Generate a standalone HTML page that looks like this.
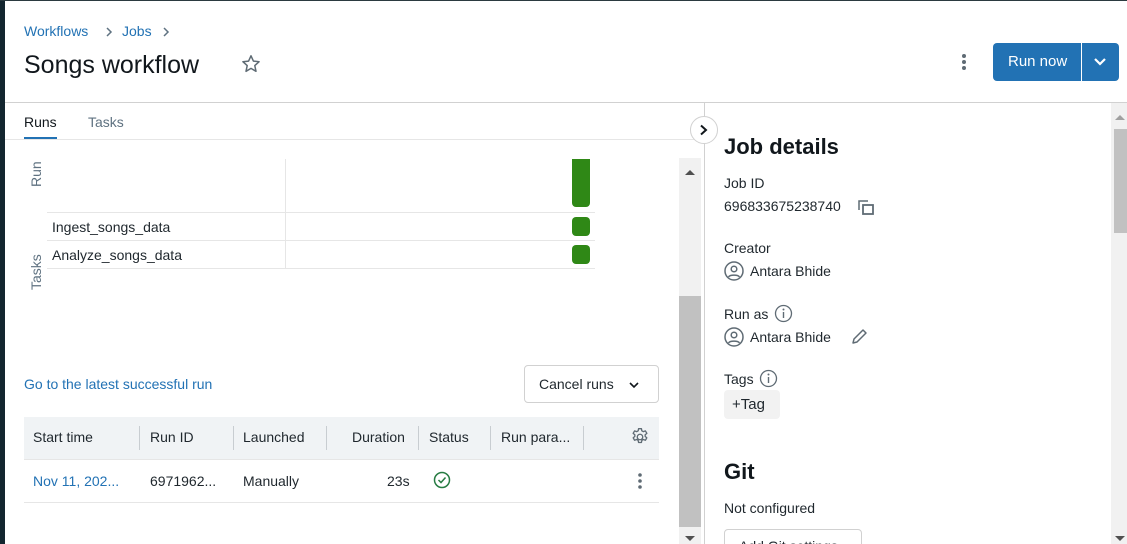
<!DOCTYPE html>
<html style="overflow:hidden;height:544px"><head><style>
*{margin:0;padding:0;box-sizing:border-box}
body{width:1127px;height:544px;overflow:hidden;background:#fff;font-family:"Liberation Sans",sans-serif;color:#1f272d;position:relative;font-size:14px}
.a{position:absolute;white-space:nowrap}
.blue{color:#2272b4}
.hl{position:absolute;background:#e6e6e6;height:1px}
.vl{position:absolute;background:#e6e6e6;width:1px}
.th{position:absolute;top:429px;font-size:14px;color:#1f272d}
.sep{position:absolute;top:426px;width:1px;height:24px;background:#c8cdd1}
</style></head><body>
<div class="a" style="left:0;top:0;width:5px;height:544px;background:#13262f"></div>
<div class="a" style="left:0;top:0;width:1127px;height:1px;background:#2b3a40"></div>

<div class="a blue" style="left:24px;top:23px;font-size:14px">Workflows</div>
<svg class="a" style="left:104px;top:26px" width="10" height="12"><path d="M3 2l4 4-4 4" fill="none" stroke="#5f7281" stroke-width="1.5"/></svg>
<div class="a blue" style="left:122px;top:23px;font-size:14px">Jobs</div>
<svg class="a" style="left:161px;top:26px" width="10" height="12"><path d="M3 2l4 4-4 4" fill="none" stroke="#5f7281" stroke-width="1.5"/></svg>
<div class="a" style="left:24px;top:51px;font-size:25px;color:#11171c">Songs workflow</div>
<svg class="a" style="left:241px;top:54px" width="20" height="20" viewBox="0 0 20 20"><path d="M10 1.8l2.4 5.3 5.7.6-4.3 3.9 1.2 5.7L10 14.4l-5 2.9 1.2-5.7L1.9 7.7l5.7-.6z" fill="none" stroke="#5f6b74" stroke-width="1.5" stroke-linejoin="round"/></svg>

<svg class="a" style="left:960px;top:53px" width="8" height="18"><circle cx="4" cy="3" r="2" fill="#5f6b74"/><circle cx="4" cy="9" r="2" fill="#5f6b74"/><circle cx="4" cy="15" r="2" fill="#5f6b74"/></svg>
<div class="a" style="left:993px;top:43px;width:126px;height:38px;background:#2272b4;border-radius:4px"></div>
<div class="a" style="left:1081px;top:43px;width:1px;height:38px;background:#fff"></div>
<div class="a" style="left:1008px;top:53px;color:#fff;font-size:15px">Run now</div>
<svg class="a" style="left:1093px;top:56px" width="14" height="12"><path d="M2 3l5 5 5-5" fill="none" stroke="#fff" stroke-width="2.2"/></svg>

<div class="hl" style="left:5px;top:102px;width:1122px;background:#d1d1d1"></div>
<div class="vl" style="left:704px;top:102px;height:442px;background:#d1d1d1"></div>

<div class="a" style="left:24px;top:114px;font-size:14px;color:#11171c">Runs</div>
<div class="a" style="left:24px;top:137px;width:33px;height:3px;background:#2272b4"></div>
<div class="a" style="left:88px;top:114px;font-size:14px;color:#5f7281">Tasks</div>
<div class="hl" style="left:5px;top:139px;width:699px"></div>

<div class="a" style="left:690px;top:116px;width:28px;height:28px;border:1px solid #d1d1d1;border-radius:50%;background:#fff"></div>
<svg class="a" style="left:699px;top:124px" width="10" height="12"><path d="M2 1.5l5 4.5-5 4.5" fill="none" stroke="#11171c" stroke-width="2"/></svg>

<div class="a" style="top:187px;left:28px;transform:rotate(-90deg);transform-origin:left top;font-size:14px;color:#5f7281">Run</div>
<div class="a" style="left:28px;top:290px;transform:rotate(-90deg);transform-origin:left top;font-size:14px;color:#5f7281">Tasks</div>
<div class="vl" style="left:285px;top:159px;height:110px"></div>
<div class="hl" style="left:47px;top:212px;width:548px"></div>
<div class="hl" style="left:47px;top:240px;width:548px"></div>
<div class="hl" style="left:47px;top:268px;width:548px"></div>
<div class="a" style="left:52px;top:219px;color:#1f272d">Ingest_songs_data</div>
<div class="a" style="left:52px;top:247px;color:#1f272d">Analyze_songs_data</div>
<div class="a" style="left:572px;top:159px;width:18px;height:48px;background:#2f8816;border-radius:0 0 4px 4px"></div>
<div class="a" style="left:572px;top:217px;width:18px;height:19px;background:#2f8816;border-radius:4px"></div>
<div class="a" style="left:572px;top:245px;width:18px;height:19px;background:#2f8816;border-radius:4px"></div>

<div class="a" style="left:679px;top:158px;width:22px;height:386px;background:#f1f1f1"></div>
<div class="a" style="left:679px;top:296px;width:22px;height:231px;background:#c1c1c1"></div>
<svg class="a" style="left:684px;top:168px" width="12" height="8"><path d="M1 7l5-5 5 5z" fill="#505050"/></svg>
<svg class="a" style="left:684px;top:535px" width="12" height="8"><path d="M1 1l5 5 5-5z" fill="#505050"/></svg>

<div class="a blue" style="left:24px;top:376px">Go to the latest successful run</div>
<div class="a" style="left:524px;top:365px;width:135px;height:38px;border:1px solid #d1d1d1;border-radius:4px"></div>
<div class="a" style="left:539px;top:376px">Cancel runs</div>
<svg class="a" style="left:628px;top:380px" width="12" height="10"><path d="M2 3l4 4 4-4" fill="none" stroke="#11171c" stroke-width="1.6"/></svg>

<div class="a" style="left:24px;top:417px;width:635px;height:42px;background:#f0f3f5"></div>
<div class="hl" style="left:24px;top:459px;width:635px"></div>
<div class="th" style="left:33px">Start time</div><div class="sep" style="left:139px"></div>
<div class="th" style="left:150px">Run ID</div><div class="sep" style="left:233px"></div>
<div class="th" style="left:243px">Launched</div><div class="sep" style="left:326px"></div>
<div class="th" style="left:352px">Duration</div><div class="sep" style="left:418px"></div>
<div class="th" style="left:429px">Status</div><div class="sep" style="left:490px"></div>
<div class="th" style="left:501px">Run para...</div><div class="sep" style="left:583px"></div>
<svg class="a" style="left:630px;top:427px" width="20" height="20" viewBox="0 0 24 24"><circle cx="12" cy="12" r="3.3" fill="none" stroke="#5f6b74" stroke-width="1.6"/><path d="M10.3 2h3.4l.5 2.6 1.8 1 2.5-.9 1.7 2.9-2 1.7v2l2 1.7-1.7 2.9-2.5-.9-1.8 1-.5 2.6h-3.4l-.5-2.6-1.8-1-2.5.9-1.7-2.9 2-1.7v-2l-2-1.7 1.7-2.9 2.5.9 1.8-1z" fill="none" stroke="#5f6b74" stroke-width="1.6" stroke-linejoin="round"/></svg>

<div class="a blue" style="left:33px;top:473px">Nov 11, 202...</div>
<div class="a" style="left:150px;top:473px">6971962...</div>
<div class="a" style="left:243px;top:473px">Manually</div>
<div class="a" style="left:387px;top:473px">23s</div>
<svg class="a" style="left:433px;top:471px" width="18" height="18"><circle cx="9" cy="9" r="7.5" fill="none" stroke="#277c43" stroke-width="1.5"/><path d="M5.5 9l2.5 2.5 4.5-5" fill="none" stroke="#277c43" stroke-width="1.5"/></svg>
<svg class="a" style="left:636px;top:472px" width="8" height="18"><circle cx="4" cy="3" r="1.8" fill="#5f6b74"/><circle cx="4" cy="9" r="1.8" fill="#5f6b74"/><circle cx="4" cy="15" r="1.8" fill="#5f6b74"/></svg>
<div class="hl" style="left:24px;top:502px;width:635px"></div>

<div class="a" style="left:724px;top:134px;font-size:22px;font-weight:bold;color:#11171c">Job details</div>
<div class="a" style="left:724px;top:175px">Job ID</div>
<div class="a" style="left:724px;top:198px">696833675238740</div>
<svg class="a" style="left:857px;top:199px" width="18" height="18"><path d="M2 11V2h9" fill="none" stroke="#5f6b74" stroke-width="1.5"/><rect x="6" y="6" width="10" height="9" fill="none" stroke="#5f6b74" stroke-width="1.8"/></svg>
<div class="a" style="left:724px;top:240px">Creator</div>
<svg class="a" style="left:724px;top:261px" width="20" height="20"><circle cx="10" cy="10" r="9" fill="none" stroke="#5f6b74" stroke-width="1.5"/><circle cx="10" cy="8" r="2.8" fill="none" stroke="#5f6b74" stroke-width="1.5"/><path d="M4.5 16c1.5-2.5 9.5-2.5 11 0" fill="none" stroke="#5f6b74" stroke-width="1.5"/></svg>
<div class="a" style="left:750px;top:263px">Antara Bhide</div>
<div class="a" style="left:724px;top:306px">Run as</div>
<svg class="a" style="left:774px;top:304px" width="19" height="19"><circle cx="9.5" cy="9.5" r="8" fill="none" stroke="#5f6b74" stroke-width="1.3"/><path d="M9.5 8v6" stroke="#5f6b74" stroke-width="1.4"/><circle cx="9.5" cy="5.5" r="1" fill="#5f6b74"/></svg>
<svg class="a" style="left:724px;top:327px" width="20" height="20"><circle cx="10" cy="10" r="9" fill="none" stroke="#5f6b74" stroke-width="1.5"/><circle cx="10" cy="8" r="2.8" fill="none" stroke="#5f6b74" stroke-width="1.5"/><path d="M4.5 16c1.5-2.5 9.5-2.5 11 0" fill="none" stroke="#5f6b74" stroke-width="1.5"/></svg>
<div class="a" style="left:750px;top:329px">Antara Bhide</div>
<svg class="a" style="left:850px;top:327px" width="19" height="19"><path d="M3 16l1-4L13 3l3 3-9 9z" fill="none" stroke="#5f6b74" stroke-width="1.5" stroke-linejoin="round"/></svg>
<div class="a" style="left:724px;top:371px">Tags</div>
<svg class="a" style="left:759px;top:369px" width="19" height="19"><circle cx="9.5" cy="9.5" r="8" fill="none" stroke="#5f6b74" stroke-width="1.3"/><path d="M9.5 8v6" stroke="#5f6b74" stroke-width="1.4"/><circle cx="9.5" cy="5.5" r="1" fill="#5f6b74"/></svg>
<div class="a" style="left:724px;top:390px;width:56px;height:29px;background:#f2f2f2;border-radius:4px"></div>
<div class="a" style="left:732px;top:396px;font-size:15px">+Tag</div>
<div class="a" style="left:724px;top:459px;font-size:22px;font-weight:bold;color:#11171c">Git</div>
<div class="a" style="left:724px;top:500px">Not configured</div>
<div class="a" style="left:724px;top:529px;width:138px;height:15px;overflow:hidden"><div style="position:absolute;left:0;top:0;width:138px;height:30px;border:1px solid #d1d1d1;border-radius:4px"></div><div class="a" style="left:15px;top:9px">Add Git settings</div></div>

<div class="a" style="left:1111px;top:103px;width:16px;height:441px;background:#f1f1f1"></div>
<div class="a" style="left:1114px;top:129px;width:13px;height:104px;background:#c1c1c1"></div>
<svg class="a" style="left:1114px;top:113px" width="12" height="8"><path d="M1 7l5-5 5 5z" fill="#a0a0a0"/></svg>
<svg class="a" style="left:1114px;top:535px" width="12" height="8"><path d="M1 1l5 5 5-5z" fill="#505050"/></svg>
</body></html>
